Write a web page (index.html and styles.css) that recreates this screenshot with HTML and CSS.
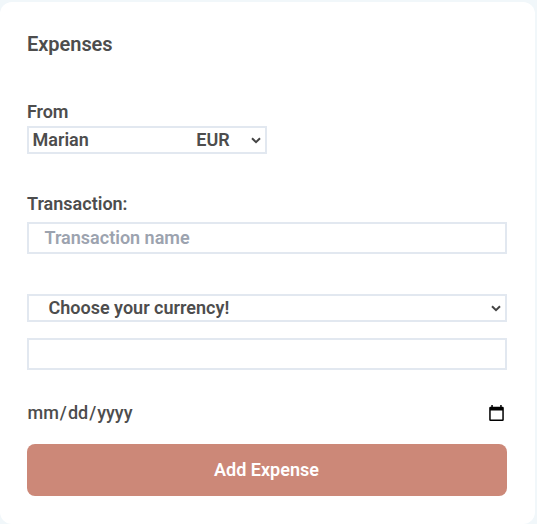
FILE: index.html
```html
<!DOCTYPE html>
<html lang="en">
<head>
<meta charset="utf-8">
<title>Expenses</title>
<link rel="stylesheet" href="styles.css">
</head>
<body>
<main class="card">
  <h1 class="title">Expenses</h1>
  <div class="label from-label">From</div>
  <div class="field account"><span>Marian</span><span class="code">EUR</span><svg class="chevron" viewBox="0 0 10 7"><path d="M1 1.2 5 5.2 9 1.2"/></svg></div>
  <div class="label transaction-label">Transaction:</div>
  <div class="field name"><span>Transaction name</span></div>
  <div class="field currency"><span>Choose your currency!</span><svg class="chevron" viewBox="0 0 10 7"><path d="M1 1.2 5 5.2 9 1.2"/></svg></div>
  <div class="field amount"></div>
  <div class="date"><span>mm<i>/</i>dd<i>/</i>yyyy</span><svg class="calendar" viewBox="0 0 15 17"><path d="M2.3 0h1.5v1.8h7.4V0h1.5v1.8h.8q1.3 0 1.3 1.3v11.6q0 1.3-1.3 1.3h-12Q.2 16 .2 14.700V3.100q0-1.300 1.300-1.300h.8zM1.700 5.500v9h11.600v-9z" fill-rule="evenodd"/></svg></div>
  <button class="submit" type="button">Add Expense</button>
</main>
</body>
</html>
```
FILE: styles.css
```css
* { box-sizing: border-box; }
body { margin: 0; height: 524px; overflow: hidden; background: #f1f7fa; font: 600 18px/28px Roboto, sans-serif; color: #4d4d4d; }
.card { width: 535px; height: 522px; margin-top: 2px; padding: 28px 28px 28px 27px; background: #fff; border-radius: 12px; display: flex; flex-direction: column; }
.title { margin: 0; font-size: 20px; line-height: 28px; font-weight: 600; letter-spacing: -0.04px; }
.label { height: 28px; }
.from-label { margin-top: 40px; letter-spacing: -0.1px; }
.field { border: 2px solid #e2e8f0; display: flex; align-items: center; flex: none; }
.account { width: 240px; height: 28px; padding: 0 4px 0 3.5px; }
.code { margin-left: 107.500px; }
.chevron { width: 10px; height: 7px; margin-left: auto; fill: none; stroke: #444; stroke-width: 2; }
.transaction-label { margin-top: 36px; }
.name { height: 32px; margin-top: 4px; padding: 0 15.500px; color: #9ca3af; }
.currency { height: 28px; margin-top: 40px; padding: 0 4px 0 19.500px; }
.amount { height: 32px; margin-top: 16px; }
.date { height: 28px; margin-top: 29px; display: flex; align-items: center; justify-content: space-between; padding: 0 3px 0 0.500px; font-weight: 500; }
.date i { font-style: normal; padding: 0 1px; }
.calendar { width: 15px; height: 17px; fill: #000; }
.submit { height: 52px; flex: none; margin-top: 17px; padding: 0 7px 0 6px; border: 0; border-radius: 8px; background: #cc8878; color: #fff; font: inherit; }
```
